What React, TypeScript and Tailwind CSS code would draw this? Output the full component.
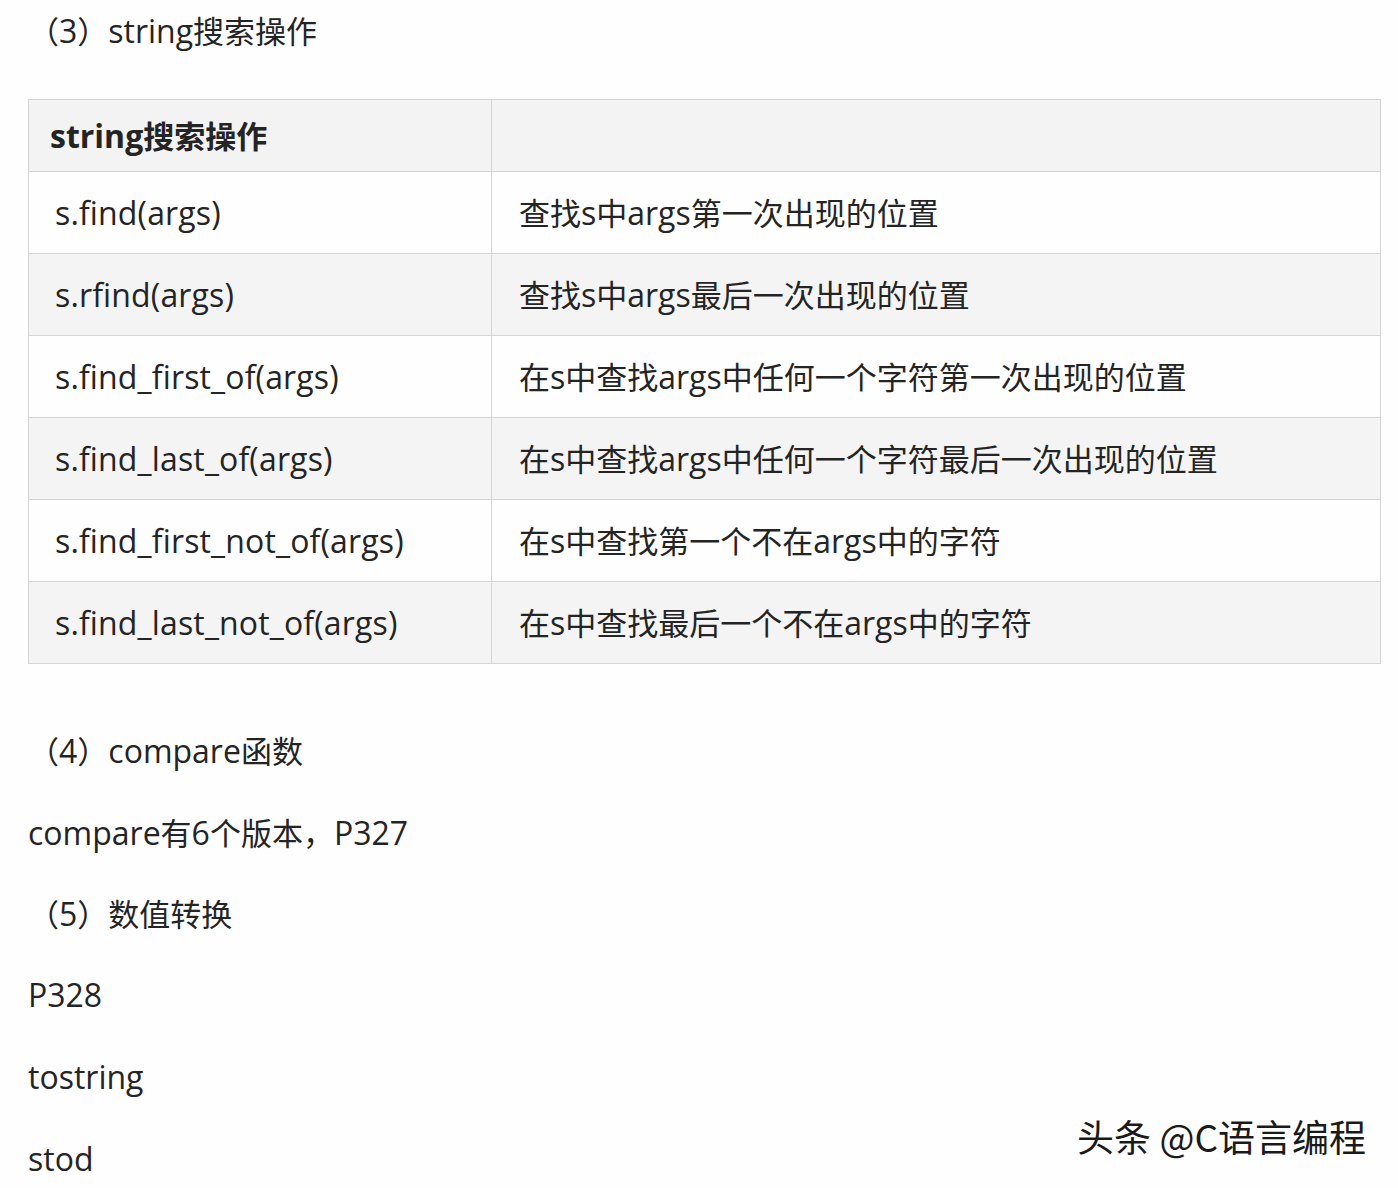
import React from "react";

const rows = [
  ["s.find(args)", "查找s中args第一次出现的位置"],
  ["s.rfind(args)", "查找s中args最后一次出现的位置"],
  ["s.find_first_of(args)", "在s中查找args中任何一个字符第一次出现的位置"],
  ["s.find_last_of(args)", "在s中查找args中任何一个字符最后一次出现的位置"],
  ["s.find_first_not_of(args)", "在s中查找第一个不在args中的字符"],
  ["s.find_last_not_of(args)", "在s中查找最后一个不在args中的字符"],
];

const font = {
  fontFamily: '"Open Sans", "Noto Sans CJK SC", sans-serif',
};

// chinese glyphs come out a bit narrower than the latin ones in the shot
const Txt = ({ s }: { s: string }) => {
  const parts = s.match(/[\u3000-\u9fff\uff00-\uffef]+|[^\u3000-\u9fff\uff00-\uffef]+/g) || [];
  return (
    <>
      {parts.map((p, i) =>
        /[\u3000-\u9fff\uff00-\uffef]/.test(p) ? (
          <span key={i} className="text-[31px]">
            {p}
          </span>
        ) : (
          <span key={i}>{p}</span>
        )
      )}
    </>
  );
};

const App = () => {
  return (
    <div
      className="w-[1398px] h-[1188px] bg-[#fefefe] text-[#242424] text-[32px] relative overflow-hidden"
      style={font}
    >
      <div className="pl-[28px] h-[62px] flex items-center">
        <Txt s="（3）string搜索操作" />
      </div>

      <div className="pl-[28px] pt-[37px]">
        <table className="border-collapse w-[1353px] table-fixed">
          <colgroup>
            <col className="w-[463px]" />
            <col />
          </colgroup>
          <thead>
            <tr className="h-[72px] bg-[#f3f3f3]">
              <th className="border border-[#d4d4d4] text-left font-bold pl-[21px] align-middle">
                <Txt s="string搜索操作" />
              </th>
              <th className="border border-[#d4d4d4]"></th>
            </tr>
          </thead>
          <tbody>
            {rows.map(([a, b], i) => (
              <tr key={a} className={i % 2 === 1 ? "h-[82px] bg-[#f4f4f4]" : "h-[82px] bg-[#fefefe]"}>
                <td className="border border-[#d4d4d4] pl-[26px] align-middle tracking-[0.15px]">{a}</td>
                <td className="border border-[#d4d4d4] pl-[27px] align-middle">
                  <Txt s={b} />
                </td>
              </tr>
            ))}
          </tbody>
        </table>
      </div>

      <div className="pl-[28px]">
        <div className="h-[82px] mt-[46px] flex items-center">
          <Txt s="（4）compare函数" />
        </div>
        <div className="h-[82px] flex items-center">
          <Txt s="compare有6个版本，P327" />
        </div>
        <div className="h-[80px] flex items-center">
          <Txt s="（5）数值转换" />
        </div>
        <div className="h-[82px] flex items-center">P328</div>
        <div className="h-[82px] flex items-center">tostring</div>
        <div className="h-[82px] flex items-center">stod</div>
      </div>

      <div
        className="absolute right-[32px] top-[1109px] text-[37px] text-[#1a1a1a]"
        style={{
          fontFamily: '"Noto Sans CJK SC", sans-serif',
          textShadow: "2px 2px 0 #fff, -1px -1px 0 #fff, 1px -1px 0 #fff, -1px 1px 0 #fff",
        }}
      >
        头条 @C语言编程
      </div>
    </div>
  );
};

export default App;
